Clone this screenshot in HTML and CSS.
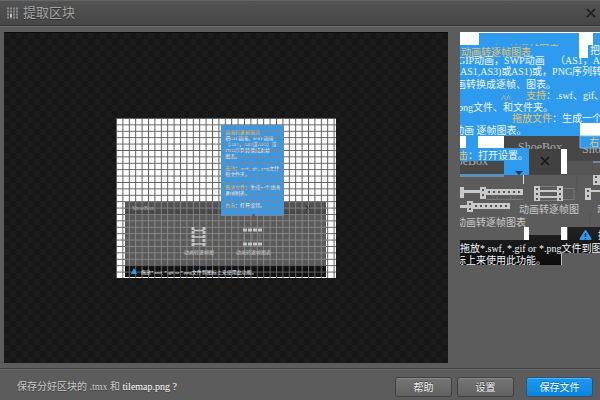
FILE: index.html
```html
<!DOCTYPE html>
<html lang="zh-CN">
<head>
<meta charset="utf-8">
<title>提取区块</title>
<link rel="stylesheet" href="styles.css">
</head>
<body>
<header class="titlebar">
  <svg class="logo" viewBox="0 0 12 12" aria-hidden="true">
    <path d="M0 1.500h12M0 4.500h12M0 7.500h12M0 10.500h12" stroke="#8c8c8c" stroke-width="2" stroke-dasharray="2 1"/>
    <path d="M0 3h12M0 6h12M0 9h12" stroke="#707070" stroke-dasharray="1 2"/>
    <path d="M3 7h2v3H3z" fill="#c4c4c4"/>
  </svg>
  <h1 class="title">提取区块</h1>
  <button class="close" type="button" aria-label="关闭">
    <svg viewBox="0 0 10 10"><path d="M1 1l8 8M9 1L1 9" stroke="#1c1c1c" stroke-width="1.6"/></svg>
  </button>
</header>

<main class="workspace">
  <section class="canvas">
    <svg class="source" viewBox="0 0 220 160">
      <defs>
        <pattern id="grid" width="6.4" height="6.4" patternUnits="userSpaceOnUse">
          <path d="M.5 0v6.4M0 .5h6.4" stroke="#333" stroke-opacity=".8"/>
        </pattern>
        <pattern id="warmgrid" width="6.4" height="6.4" patternUnits="userSpaceOnUse">
          <path d="M.5 0v6.4M0 .5h6.4" stroke="#a87961" stroke-opacity=".75"/>
        </pattern>
        <pattern id="palegrid" width="6.4" height="6.4" patternUnits="userSpaceOnUse">
          <path d="M.5 0v6.4M0 .5h6.4" stroke="#aaa" stroke-opacity=".55"/>
        </pattern>
        <linearGradient id="bar" x2="0" y2="1"><stop stop-color="#555"/><stop offset="1" stop-color="#444"/></linearGradient>
      </defs>
      <rect width="220" height="160" fill="#fff"/>
      <rect width="220" height="160" fill="url(#grid)"/>
      <rect x="9" y="84" width="201" height="75" fill="#5a5a5a"/>
      <rect x="9" y="84" width="201" height="13" fill="url(#bar)"/>
      <rect x="9" y="147" width="201" height="12" fill="#111"/>
      <text class="brand small" x="16" y="92">ShoeBox</text>
      <path d="M190 88l4 4m0-4l-4 4" stroke="#222"/>
      <rect x="9" y="84" width="201" height="75" fill="url(#palegrid)"/>
      <g fill="none" stroke="#c5c5c5">
        <path d="M77 109v20M88 109v20" stroke-width="3" stroke-dasharray="3 1"/>
        <path d="M78 112.500h10M78 119h10M78 126h10" stroke-width="1.500"/>
        <path d="M127 112h19M127 126h19" stroke-width="3" stroke-dasharray="4 1"/>
        <path d="M128 116v7M136 116v7M144 116v7" stroke="#828282"/>
      </g>
      <text class="label small" x="68" y="136">动画转逐帧图</text>
      <text class="label small" x="120" y="136">动画转逐帧图表</text>
      <path d="M18 150l3 6h-6z" fill="#2f9bee"/>
      <text class="light notice" x="25" y="156">拖放*.swf, *.gif or *.png文件到图标上来使用此功能。</text>
      <rect x="105" y="7" width="63" height="91" fill="#2f9bee"/>
      <g class="tiny light">
        <text class="gold" x="109" y="16">动画转逐帧图表</text>
        <text x="109" y="22">把GIF动画、SWF动画</text>
        <text x="109" y="28">（AS1，AS2或AS3）或</text>
        <text x="109" y="34">PNG序列转换成逐帧</text>
        <text x="109" y="40">图表。</text>
        <text x="109" y="52"><tspan class="gold">支持</tspan>：.swf, .gif, .png文件</text>
        <text x="109" y="58">和文件夹。</text>
        <text x="109" y="71"><tspan class="gold">拖放文件</tspan>：生成一个动画</text>
        <text x="109" y="77">逐帧图表。</text>
        <text x="109" y="89"><tspan class="gold">右击</tspan>：打开设置。</text>
      </g>
      <path d="M135 96h5l-2.500 2z" fill="#223d55"/>
      <rect x="105" y="7" width="63" height="91" fill="url(#warmgrid)"/>
    </svg>
  </section>

  <aside class="tiles">
    <svg class="atlas" viewBox="0 0 140 234">
      <defs>
        <linearGradient id="dark" x2="0" y2="1"><stop stop-color="#222"/><stop offset="1" stop-color="#0c0c0c"/></linearGradient>
        <clipPath id="brandclip"><path d="M44 104h76v13H44z"/></clipPath>
        <clipPath id="brandlow"><path d="M0 129h44v8H0zM114 116h26v9h-26z"/></clipPath>
      </defs>
      <path d="M0 0h140v118H69v26H0z" fill="#2f9bee"/>
      <path d="M0 0h140v1H19v12H0zM119 1h14v12h-5v13h-9z" fill="#fff"/>
      <g class="tip light">
        <text class="gold" x="29" y="21">动画转逐帧图表</text>
        <path d="M69 14h30v9H69zM20 3h60v9H20zM0 13h70v11H0z" fill="#2f9bee"/>
        <text class="gold" x="1" y="24">动画转逐帧图表</text>
        <text x="130" y="22">把</text>
        <text x="-2" y="32">GIP动画，SWP动画</text>
        <text x="95" y="32">（AS1，AS</text>
        <text x="0" y="43">AS1,AS3)或</text>
        <text x="51" y="43">AS1)或，PNG序列转换</text>
        <text x="-4" y="56">画转换成逐帧、图表。</text>
        <text class="gold" x="41" y="70">^^.</text>
        <text x="66" y="67"><tspan class="gold">支持</tspan>：.swf、gif、.p</text>
        <text x="-2" y="79">png文件、和文件夹。</text>
        <text x="52" y="90"><tspan class="gold">拖放文件</tspan>：生成一个动</text>
        <text x="-6" y="102">动画 逐帧图表。</text>
      </g>
      <path d="M0 104h6v12H0zM18 104h26v12H18zM120 91h20v13h-20z" fill="#fff"/>
      <path d="M44 104h96v39H44z" fill="#474747"/>
      <path d="M107 129h33v14h-33z" fill="#565656"/>
      <text class="brand" x="58" y="119" clip-path="url(#brandclip)">ShoeBox</text>
      <path d="M0 116h69v27H0z" fill="#2f9bee"/>
      <path d="M0 129h44v13H0z" fill="#484848"/>
      <text class="brand" x="-16" y="133" clip-path="url(#brandlow)">ShoeBox</text>
      <text class="brand" x="122" y="121" clip-path="url(#brandlow)">Shoe</text>
      <path d="M120 104h21v12h-21z" fill="#2f9bee" stroke="#7fb5df"/>
      <g class="tip light">
        <text x="-2" y="127"><tspan class="gold">击</tspan>：打开设置。</text>
        <text class="gold" x="129" y="114">右</text>
      </g>
      <path d="M101 117h6v25h-6z" fill="#fff"/>
      <path d="M70 117h31v25H70z" fill="#414141"/>
      <path d="M81 125l8 8m0-8l-8 8" stroke="#161616" stroke-width="1.600"/>
      <path d="M55 139h8l-4 4z" fill="#1f3448"/>
      <path d="M0 143h140v91H0z" fill="#5c5c5c"/>
      <path d="M0 144h44M133 130h7" stroke="#8eb7d7"/>
      <path d="M63.500 143v9" stroke="#ddd"/>
      <path d="M117 143v16M130 182v9" stroke="#525252"/>
      <g fill="#c9c9c9">
        <path d="M26 157h37v6H26zM13 171h37v6H13zM74 154h6v15h-6zM97 154h6v15h-6zM80 158h17v2H80zM80 164h17v2H80zM125 156h6v12h-6zM131 158h9v2h-9z"/>
        <path d="M20 155h6v12h-6zM0 155h4v11H0zM4 158h16v3H4zM7 169h6v11H7zM0 173h7v3H0zM133 143h7v10h-7z"/>
      </g>
      <path d="M28 160h34M15 174h34M77 156v12M100 156v12M128 158v10M136 144v8M23 157v9M10 171v8" fill="none" stroke="#545454" stroke-width="2" stroke-dasharray="2 3"/>
      <path d="M26 167.500h37M103 156.500h11v11h-11M37 164v4M51 164v4M80 154.500h17M80 168.500h17" fill="none" stroke="#7b7b7b"/>
      <g class="tip label">
        <text x="59" y="181">动画转逐帧图</text>
        <text x="137" y="181">动</text>
        <text x="-4" y="194">动画转逐帧图表</text>
      </g>
      <path d="M64 195h5v13h-5zM101 195h6v13h-6z" fill="#fff"/>
      <path d="M0 208h69v-5h32v5h7v-13h32v26h-38v12H0z" fill="url(#dark)"/>
      <path d="M125.500 199l5 8h-10z" fill="#2f9bee" stroke="#2f9bee" stroke-width="2" stroke-linejoin="round"/>
      <path d="M125.500 201v4m0 1v1.500" stroke="#14334b" stroke-width="1.500"/>
      <g class="tip light">
        <text x="0" y="220">拖放*.swf, *.gif or *.png文件到图标</text>
        <text x="-4" y="232">标上来使用此功能。</text>
        <text x="138" y="207">拖</text>
      </g>
      <path d="M101.500 221v12" stroke="#bbb"/>
    </svg>
  </aside>
</main>

<footer class="actions">
  <p class="question">保存分好区块的 .tmx 和 <strong>tilemap.png ?</strong></p>
  <button class="button" type="button">帮助</button>
  <button class="button" type="button">设置</button>
  <button class="button primary" type="button">保存文件</button>
</footer>
</body>
</html>
```

FILE: styles.css
```css
* { box-sizing: border-box; }

body {
  margin: 0;
  min-height: 100vh;
  display: flex;
  flex-direction: column;
  background: #5c5c5c;
  color: #c8c8c8;
  font: 10px/14px "Liberation Serif", "Noto Sans CJK SC", serif;
}

.titlebar {
  display: flex;
  align-items: center;
  height: 26px;
  padding: 0 4px 0 7px;
  border-top: 1px solid #666;
  border-bottom: 1px solid #353535;
  background: linear-gradient(#535353, #464646);
}

.logo { width: 12px; height: 12px; margin-right: 4px; }

.title {
  flex: 1;
  margin: 0;
  padding-bottom: 2px;
  color: #a5a5a5;
  font: 13px/20px "Noto Sans CJK SC", sans-serif;
  text-shadow: 0 1px #333;
}

.close {
  width: 10px;
  height: 10px;
  padding: 0;
  border: 0;
  background: none;
}

.close svg { display: block; }

.workspace {
  flex: 1;
  display: flex;
  gap: 12px;
  padding: 5px 0 5px 4px;
  border-top: 1px solid #6a6a6a;
}

.canvas {
  flex: 1;
  display: flex;
  align-items: center;
  justify-content: center;
  border-top: 1px solid #0d0d0d;
  background: repeating-conic-gradient(#161616 0 25%, #1b1b1b 0 50%) 0 0 / 12px 12px;
}

.source { width: 220px; height: 160px; }

.tiles { width: 140px; }

.atlas { display: block; width: 100%; }

svg text { fill: #c8c8c8; }
.tip text { font-size: 10px; }
.tiny text, text.small, text.notice { font-size: 5px; }
.light text, text.light { fill: #f1f6fa; }
.gold text, .light text.gold, text .gold { fill: #e8c260; }
text.brand { fill: #aaa; font-size: 12px; }
text.brand.small { font-size: 6px; }

.actions {
  display: flex;
  align-items: center;
  gap: 5px;
  height: 32px;
  padding: 5px 7px 0 17px;
  border-top: 1px solid #444;
  box-shadow: inset 0 1px #686868;
}

.question { flex: 1; margin: 0; text-shadow: 0 1px #444; }
.question strong { color: #fff; font-weight: 400; }

.button {
  width: 57px;
  height: 20px;
  padding: 0;
  border: 1px solid #414141;
  border-radius: 3px;
  background: linear-gradient(#757575, #616161);
  box-shadow: inset 0 1px #888;
  color: #eee;
  font: 10px/16px "Noto Sans CJK SC", sans-serif;
  text-shadow: 0 -1px #444;
}

.primary {
  width: 67px;
  margin-left: 7px;
  border-color: #36536a;
  background: linear-gradient(#189bf5, #0c85dc);
  box-shadow: inset 0 1px #4bb2fb;
  color: #fff;
  text-shadow: 0 -1px #17639b;
}
```
